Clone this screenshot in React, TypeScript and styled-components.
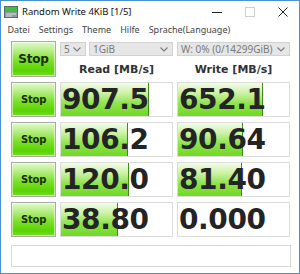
import React from 'react';
import styled, { createGlobalStyle } from 'styled-components';

const GlobalStyle = createGlobalStyle`
  html, body {
    margin: 0;
    padding: 0;
    background: #ffffff;
  }
  * {
    box-sizing: border-box;
  }
`;

const S = {
  Window: styled.div`
    width: 300px;
    height: 274px;
    display: flex;
    flex-direction: column;
    border: 1px solid #4a90d9;
    background: #ffffff;
    font-family: 'Noto Sans', 'DejaVu Sans', sans-serif;
  `,
  TitleBar: styled.div`
    height: 21px;
    display: flex;
    align-items: center;
    padding-left: 3px;
  `,
  Title: styled.div`
    flex: 1;
    margin-left: 4px;
    font-size: 9.5px;
    color: #111;
    white-space: nowrap;
  `,
  Controls: styled.div`
    display: flex;
    align-items: center;
    height: 100%;
  `,
  Control: styled.div`
    width: 33px;
    height: 100%;
    display: flex;
    align-items: center;
    justify-content: center;
  `,
  MenuBar: styled.div`
    height: 14px;
    display: flex;
    align-items: center;
    padding-left: 2px;
  `,
  MenuItem: styled.span`
    font-size: 9px;
    color: #444;
    padding: 0 4.5px;
    white-space: nowrap;
  `,
  Content: styled.div`
    flex: 1;
    display: flex;
    flex-direction: column;
    padding: 5px 8px 5px 10px;
  `,
  Grid: styled.div`
    display: grid;
    grid-template-columns: 45px 113px 113px;
    grid-template-rows: 36px repeat(4, 35px);
    column-gap: 4px;
    row-gap: 5px;
  `,
  StopButton: styled.div<{ $big?: boolean }>`
    display: flex;
    align-items: center;
    justify-content: center;
    border: 1px solid #a9a9a9;
    background: linear-gradient(
      to bottom,
      #e2f9cc 0%,
      #b8ee86 25%,
      #7ddf2e 55%,
      #5ad400 85%,
      #78dc30 100%
    );
    box-shadow: inset 0 0 0 1px rgba(255, 255, 255, 0.55);
    font-family: 'DejaVu Sans', sans-serif;
    font-weight: bold;
    font-size: ${(p) => (p.$big ? '12px' : '10px')};
    color: #183000;
    letter-spacing: -0.2px;
  `,
  HeaderCell: styled.div`
    display: flex;
    flex-direction: column;
    justify-content: space-between;
    padding-top: 1px;
  `,
  ComboRow: styled.div`
    display: flex;
    gap: 3px;
    height: 14px;
  `,
  Combo: styled.div<{ $w?: number }>`
    ${(p) => (p.$w ? `width: ${p.$w}px;` : 'flex: 1;')}
    height: 14px;
    display: flex;
    align-items: center;
    justify-content: space-between;
    padding: 0 4px 0 3px;
    background: #e6e6e6;
    border: 1px solid #d2d2d2;
    font-size: 10px;
    color: #7a7a7a;
    white-space: nowrap;
  `,
  Label: styled.div`
    text-align: center;
    font-family: 'DejaVu Sans', sans-serif;
    font-weight: bold;
    font-size: 11px;
    color: #333;
    line-height: 14px;
  `,
  ValueBox: styled.div`
    position: relative;
    border: 1px solid #dcdcdc;
    background: #ffffff;
    display: flex;
    align-items: center;
    overflow: hidden;
  `,
  Bar: styled.div`
    position: absolute;
    left: 0;
    top: 0;
    bottom: 0;
    border-right: 1px solid #3f8a18;
    background: linear-gradient(
      to bottom,
      #f3fbeb 0%,
      #cdf2a6 30%,
      #90e24e 62%,
      #6fda22 100%
    );
  `,
  Value: styled.span`
    position: relative;
    padding-left: 1px;
    font-family: 'DejaVu Sans', sans-serif;
    font-weight: bold;
    font-size: 28px;
    line-height: 1;
    color: #242424;
    letter-spacing: -0.4px;
  `,
  Status: styled.div`
    margin-top: 8px;
    height: 22px;
    width: 280px;
    border: 1px solid #d8d8d8;
    background: #ffffff;
  `,
};

const Chevron = () => (
  <svg width="8" height="5" viewBox="0 0 8 5">
    <path d="M0.5 0.5 L4 4 L7.5 0.5" fill="none" stroke="#7a7a7a" strokeWidth="1.1" />
  </svg>
);

const AppIcon = () => (
  <svg width="14" height="14" viewBox="0 0 14 14">
    <rect x="0.5" y="1.5" width="13" height="11" fill="#8e9aa0" stroke="#5f6a70" />
    <rect x="1" y="2" width="12" height="5" fill="#3fbf3f" />
    <rect x="2" y="8.5" width="10" height="1" fill="#d8dde0" />
    <rect x="2" y="10.5" width="6" height="1" fill="#d8dde0" />
  </svg>
);

const rows = [
  { read: '907.5', readBar: 88, write: '652.1', writeBar: 85 },
  { read: '106.2', readBar: 67, write: '90.64', writeBar: 65 },
  { read: '120.0', readBar: 68, write: '81.40', writeBar: 64 },
  { read: '38.80', readBar: 57, write: '0.000', writeBar: 0 },
];

function App() {
  return (
    <>
      <GlobalStyle />
      <S.Window>
        <S.TitleBar>
          <AppIcon />
          <S.Title>Random Write 4KiB [1/5]</S.Title>
          <S.Controls>
            <S.Control>
              <svg width="10" height="10" viewBox="0 0 10 10">
                <path d="M0 5.5 H10" stroke="#222" strokeWidth="1" />
              </svg>
            </S.Control>
            <S.Control>
              <svg width="10" height="10" viewBox="0 0 10 10">
                <rect x="0.5" y="0.5" width="9" height="9" fill="none" stroke="#cfcfcf" />
              </svg>
            </S.Control>
            <S.Control>
              <svg width="10" height="10" viewBox="0 0 10 10">
                <path d="M0.5 0.5 L9.5 9.5 M9.5 0.5 L0.5 9.5" stroke="#222" strokeWidth="1" />
              </svg>
            </S.Control>
          </S.Controls>
        </S.TitleBar>
        <S.MenuBar>
          <S.MenuItem>Datei</S.MenuItem>
          <S.MenuItem>Settings</S.MenuItem>
          <S.MenuItem>Theme</S.MenuItem>
          <S.MenuItem>Hilfe</S.MenuItem>
          <S.MenuItem>Sprache(Language)</S.MenuItem>
        </S.MenuBar>
        <S.Content>
          <S.Grid>
            <S.StopButton $big>Stop</S.StopButton>
            <S.HeaderCell>
              <S.ComboRow>
                <S.Combo $w={26}>
                  5 <Chevron />
                </S.Combo>
                <S.Combo>
                  1GiB <Chevron />
                </S.Combo>
              </S.ComboRow>
              <S.Label>Read [MB/s]</S.Label>
            </S.HeaderCell>
            <S.HeaderCell>
              <S.ComboRow>
                <S.Combo>
                  W: 0% (0/14299GiB) <Chevron />
                </S.Combo>
              </S.ComboRow>
              <S.Label>Write [MB/s]</S.Label>
            </S.HeaderCell>
            {rows.map((r, i) => (
              <React.Fragment key={i}>
                <S.StopButton>Stop</S.StopButton>
                <S.ValueBox>
                  {r.readBar > 0 && <S.Bar style={{ width: r.readBar }} />}
                  <S.Value>{r.read}</S.Value>
                </S.ValueBox>
                <S.ValueBox>
                  {r.writeBar > 0 && <S.Bar style={{ width: r.writeBar }} />}
                  <S.Value>{r.write}</S.Value>
                </S.ValueBox>
              </React.Fragment>
            ))}
          </S.Grid>
          <S.Status />
        </S.Content>
      </S.Window>
    </>
  );
}

export default App;
